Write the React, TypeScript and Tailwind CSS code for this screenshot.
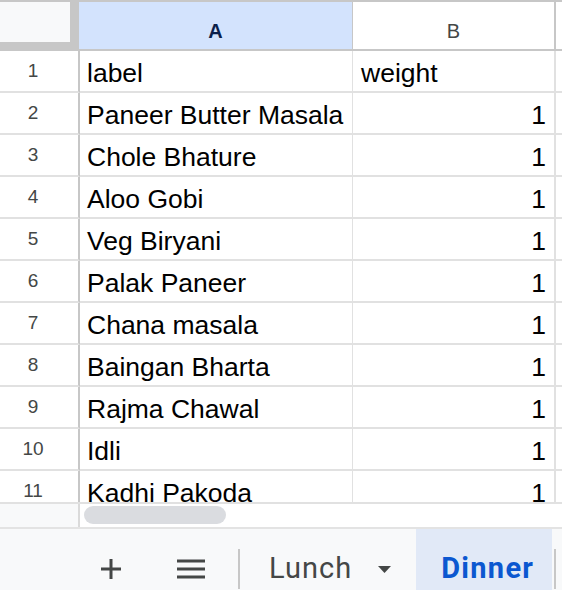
import React from 'react';

const rows: [string, string][] = [
  ['label', 'weight'],
  ['Paneer Butter Masala', '1'],
  ['Chole Bhature', '1'],
  ['Aloo Gobi', '1'],
  ['Veg Biryani', '1'],
  ['Palak Paneer', '1'],
  ['Chana masala', '1'],
  ['Baingan Bharta', '1'],
  ['Rajma Chawal', '1'],
  ['Idli', '1'],
  ['Kadhi Pakoda', '1'],
];

const PlusIcon = () => (
  <svg width="20" height="22" viewBox="0 0 20 22" className="text-[#444746]">
    <path d="M10 1v20M0 11h20" stroke="currentColor" strokeWidth="3" fill="none" />
  </svg>
);

const MenuIcon = () => (
  <svg width="28" height="20" viewBox="0 0 28 20" className="text-[#444746]">
    <path d="M0 2h28M0 10h28M0 18h28" stroke="currentColor" strokeWidth="3" fill="none" />
  </svg>
);

export default function App() {
  return (
    <div className="w-[562px] h-[590px] overflow-hidden bg-white flex flex-col font-['Liberation_Sans',Arial,sans-serif]">
      {/* column headers */}
      <div className="flex h-[51px] border-t-2 border-[#c7c7c7] shrink-0">
        <div className="w-[79px] h-[49px] bg-[#c7c7c7] shrink-0">
          <div className="w-[70px] h-[40px] bg-[#f8f9fa]" />
        </div>
        <div className="w-[274px] shrink-0 bg-[#d3e3fd] border-b-2 border-r border-[#c7c7c7] flex justify-center pt-[19px] text-[20px] font-bold text-[#0b1f4b] leading-none">
          A
        </div>
        <div className="w-[203px] shrink-0 border-b-2 border-r-2 border-[#c7c7c7] flex justify-center pt-[19px] text-[20px] text-[#444746] leading-none">
          B
        </div>
        <div className="flex-1 border-b-2 border-[#c7c7c7]" />
      </div>

      {/* rows */}
      <div className="h-[453px] overflow-hidden border-b-2 border-[#e1e1e1] shrink-0">
        {rows.map(([label, weight], i) => (
          <div key={i} className="flex h-[42px] shrink-0">
            <div className="w-[80px] shrink-0 border-r-2 border-b-2 border-r-[#c7c7c7] border-b-[#e1e1e1] pr-[12px] text-center text-[19px] leading-[40px] text-[#444746]">
              {i + 1}
            </div>
            <div className="w-[273px] shrink-0 border-r border-b-2 border-[#e1e1e1] px-[7px] pt-[2px] text-[26.5px] leading-[40px] text-black whitespace-nowrap overflow-hidden">
              {label}
            </div>
            <div
              className={`w-[203px] shrink-0 border-r-2 border-b-2 border-[#e1e1e1] px-[8px] pt-[2px] text-[26.5px] leading-[40px] text-black whitespace-nowrap overflow-hidden ${
                i === 0 ? 'text-left' : 'text-right'
              }`}
            >
              {weight}
            </div>
            <div className="flex-1 border-b-2 border-[#e1e1e1]" />
          </div>
        ))}
      </div>

      {/* horizontal scroll strip */}
      <div className="flex h-[23px] shrink-0">
        <div className="w-[80px] bg-[#f8f9fa] border-r-2 border-[#dadada] shrink-0" />
        <div className="flex-1 pl-[4px] pt-[2px]">
          <div className="w-[142px] h-[18px] rounded-full bg-[#dadce0]" />
        </div>
      </div>

      {/* sheet tabs */}
      <div className="h-[82px] shrink-0 flex items-stretch bg-[#f8f9fa] border-t-2 border-[#e3e3e3]">
        <div className="flex items-center pl-[101px]">
          <PlusIcon />
        </div>
        <div className="flex items-center pl-[56px]">
          <MenuIcon />
        </div>
        <div className="flex items-center pl-[33px]">
          <div className="w-[2px] h-[40px] bg-[#c7c7c7]" />
        </div>
        <div className="flex items-center pl-[29px] pr-[25px] font-['Roboto',sans-serif] text-[29px] text-[#444746] tracking-[1px]">
          <span>Lunch</span>
          <svg width="13" height="7" viewBox="0 0 13 7" className="ml-[26px]">
            <path d="M0 0h13L6.5 7z" fill="#444746" />
          </svg>
        </div>
        <div className="flex items-center w-[136px] bg-[#e1e9f7] pl-[25px] font-['Roboto',sans-serif] text-[29px] font-bold text-[#0b57d0] tracking-[1.3px]">
          Dinner
        </div>
        <div className="flex items-center pl-[2px]">
          <div className="w-[2px] h-[40px] bg-[#c7c7c7]" />
        </div>
      </div>
    </div>
  );
}
